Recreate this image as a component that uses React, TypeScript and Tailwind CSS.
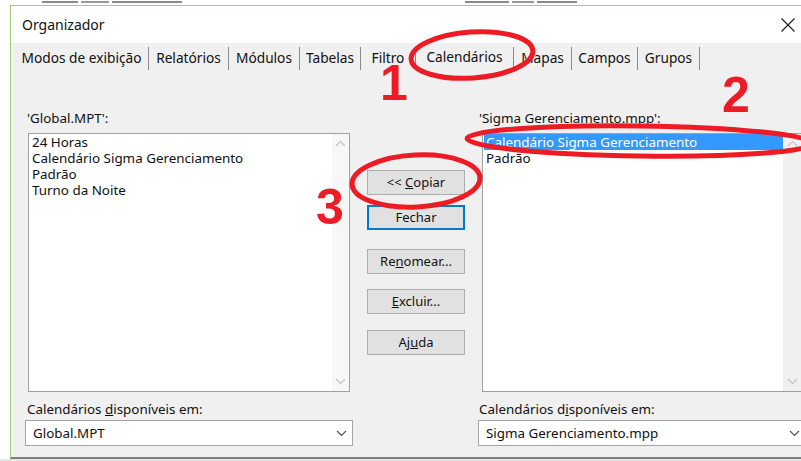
import React from "react";

type Tab = { label: string; cls: string; active?: boolean };

const tabs: Tab[] = [
  { label: "Modos de exibição", cls: "w-[134px]" },
  { label: "Relatórios", cls: "w-[80px]" },
  { label: "Módulos", cls: "w-[71px]" },
  { label: "Tabelas", cls: "w-[61px]" },
  { label: "Filtro", cls: "w-[55px]" },
  { label: "Calendários", cls: "w-[98px]", active: true },
  { label: "Mapas", cls: "w-[58px]" },
  { label: "Campos", cls: "w-[66px]" },
  { label: "Grupos", cls: "w-[62px]" },
];

const globalItems = ["24 Horas", "Calendário Sigma Gerenciamento", "Padrão", "Turno da Noite"];

function Chevron({ dir, className }: { dir: "up" | "down"; className?: string }) {
  return (
    <svg width="11" height="7" viewBox="0 0 11 7" className={className}>
      <path
        d={dir === "down" ? "M1 1 L5.5 5.5 L10 1" : "M1 6 L5.5 1.5 L10 6"}
        fill="none"
        stroke="currentColor"
        strokeWidth="1.2"
      />
    </svg>
  );
}

function Scrollbar({ className }: { className: string }) {
  return (
    <div className={`flex flex-col items-center justify-between py-[6px] text-[#c2c2c2] ${className}`}>
      <Chevron dir="up" />
      <Chevron dir="down" />
    </div>
  );
}

function DialogButton({ children, focused }: { children: React.ReactNode; focused?: boolean }) {
  return (
    <button
      type="button"
      className={
        focused
          ? "flex h-[25px] w-[98px] items-center justify-center border-2 border-[#0078d7] bg-[#e1e1e1] text-[13px] text-[#111]"
          : "flex h-[25px] w-[98px] items-center justify-center border border-[#adadad] bg-[#e1e1e1] text-[13px] text-[#111]"
      }
    >
      {children}
    </button>
  );
}

function Combo({ value }: { value: string }) {
  return (
    <div className="flex h-[26px] w-[328px] items-center justify-between border border-[#a5a5a5] bg-white pl-[7px] pr-[5px] text-[13.4px] text-[#111]">
      <span>{value}</span>
      <Chevron dir="down" className="text-[#555]" />
    </div>
  );
}

export default function App() {
  return (
    <div className="relative flex h-[461px] w-[801px] flex-col overflow-hidden bg-white font-['Noto_Sans','Open_Sans',sans-serif]">
      {/* bottoms of the window behind the dialog */}
      <div className="flex h-[5px] items-start gap-[3px] pl-[42px]">
        <div className="mt-[1px] h-[2px] w-[36px] bg-[#8a8a8a]" />
        <div className="mt-[1px] h-[2px] w-[28px] bg-[#9a9a9a]" />
        <div className="mt-[1px] h-[2px] w-[70px] bg-[#8a8a8a]" />
        <div className="ml-[280px] mt-[1px] h-[2px] w-[44px] bg-[#8a8a8a]" />
        <div className="mt-[1px] h-[2px] w-[22px] bg-[#9a9a9a]" />
        <div className="mt-[1px] h-[2px] w-[40px] bg-[#8a8a8a]" />
      </div>

      <div className="flex h-[454px]">
        <div className="w-[10px] shrink-0 bg-white" />
        <div className="flex min-w-0 flex-1 flex-col border-b-2 border-l border-t border-[#a8cf78] border-b-[#7d7d7d]">
          {/* title bar */}
          <div className="flex h-[37px] items-center justify-between bg-white pl-[11px] pr-[5px]">
            <span className="text-[14px] text-[#111]">Organizador</span>
            <svg width="16" height="16" viewBox="0 0 16 16">
              <path d="M1.5 1.5 L14.5 14.5 M14.5 1.5 L1.5 14.5" stroke="#222" strokeWidth="1.2" />
            </svg>
          </div>

          {/* tabs */}
          <div className="flex h-[27px] items-end bg-[#f0f0f0] pl-[4px]">
            {tabs.map((t) => (
              <div
                key={t.label}
                className={`${t.cls} flex h-[23px] shrink-0 justify-center whitespace-nowrap border-r border-r-[#8a8a8a] text-[13.7px] text-[#111] ${
                  t.active ? "items-start" : "items-center"
                }`}
              >
                {t.label}
              </div>
            ))}
          </div>

          {/* content */}
          <div className="flex flex-1 overflow-hidden bg-[#f0f0f0] pt-[40px]">
            {/* Global.MPT side */}
            <div className="ml-[14px] flex w-[328px] shrink-0 flex-col">
              <div className="h-[16px] pl-[2px] text-[13.4px] leading-[16px] text-[#111]">'Global.MPT':</div>
              <div className="ml-[3px] mt-[7px] flex h-[259px] w-[322px] border border-[#a0a0a0] bg-white">
                <div className="flex-1 pl-[3px] text-[13.4px] leading-[16px] text-[#111]">
                  {globalItems.map((it) => (
                    <div key={it} className="h-[16px]">
                      {it}
                    </div>
                  ))}
                </div>
                <Scrollbar className="w-[17px] bg-[#f7f7f7]" />
              </div>
              <div className="mt-[9px] h-[16px] pl-[2px] text-[13.4px] leading-[16px] text-[#111]">
                Calendários <span className="underline">d</span>isponíveis em:
              </div>
              <div className="mt-[3px]">
                <Combo value="Global.MPT" />
              </div>
            </div>

            {/* buttons */}
            <div className="ml-[14px] mt-[60px] flex w-[98px] shrink-0 flex-col">
              <DialogButton>
                &lt;&lt;&nbsp;<span className="underline">C</span>opiar
              </DialogButton>
              <div className="mt-[10px]">
                <DialogButton focused>Fechar</DialogButton>
              </div>
              <div className="mt-[19px]">
                <DialogButton>
                  Re<span className="underline">n</span>omear...
                </DialogButton>
              </div>
              <div className="mt-[15px]">
                <DialogButton>
                  <span className="underline">E</span>xcluir...
                </DialogButton>
              </div>
              <div className="mt-[16px]">
                <DialogButton>
                  Aj<span className="underline">u</span>da
                </DialogButton>
              </div>
            </div>

            {/* project file side */}
            <div className="ml-[13px] flex w-[330px] shrink-0 flex-col">
              <div className="h-[16px] pl-[1px] text-[13.4px] leading-[16px] text-[#111]">'Sigma Gerenciamento.mpp':</div>
              <div className="ml-[4px] mt-[7px] flex h-[259px] w-[320px] border border-r-0 border-[#a0a0a0] bg-white">
                <div className="flex-1 pl-[1px] text-[13.4px] leading-[16px]">
                  <div className="h-[16px] bg-[#3399ff] pl-[2px] text-white">Calendário Sigma Gerenciamento</div>
                  <div className="h-[16px] pl-[2px] text-[#111]">Padrão</div>
                </div>
                <Scrollbar className="w-[19px] bg-[#f0f0f0]" />
              </div>
              <div className="mt-[9px] h-[16px] pl-[1px] text-[13.4px] leading-[16px] text-[#111]">
                Calendários d<span className="underline">i</span>sponíveis em:
              </div>
              <div className="mt-[3px]">
                <Combo value="Sigma Gerenciamento.mpp" />
              </div>
            </div>
          </div>
        </div>
      </div>
      <div className="h-[2px] bg-[#e5e5e5]" />

      {/* hand-drawn markers */}
      <svg
        className="pointer-events-none absolute inset-0"
        width="801"
        height="461"
        viewBox="0 0 801 461"
      >
        <g fill="none" stroke="#ed1c24" strokeWidth="5">
          <ellipse cx="472" cy="55" rx="61" ry="23" transform="rotate(-4 472 55)" />
          <ellipse cx="640" cy="141" rx="173" ry="15" transform="rotate(0.8 640 141)" />
          <ellipse cx="416" cy="181" rx="64" ry="26" transform="rotate(-3 416 181)" />
        </g>
        <g fill="#ed1c24" fontFamily="'Liberation Sans', Arial, sans-serif" fontWeight="bold" fontSize="50">
          <text x="380" y="100">1</text>
          <text x="722" y="112">2</text>
          <text x="316" y="224">3</text>
        </g>
      </svg>
    </div>
  );
}
